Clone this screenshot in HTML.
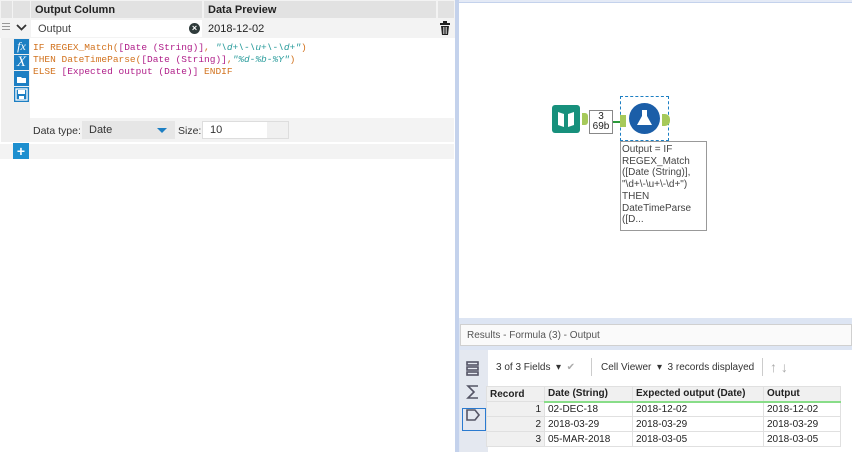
<!DOCTYPE html>
<html><head><style>
*{margin:0;padding:0;box-sizing:border-box}
body{width:852px;height:452px;overflow:hidden;background:#fff;font-family:"Liberation Sans",sans-serif;font-size:11px;color:#222;position:relative}
.a{position:absolute;white-space:nowrap}
.mono{font-family:"Liberation Mono",monospace;font-size:9.5px;line-height:12px;white-space:pre}
.o{color:#d2731f}.m{color:#b0208a}.t{color:#2a9c9c;font-style:italic}
.ib{position:absolute;left:14px;width:15px;height:15px;background:#1d7fc3;color:#fff;font-family:"Liberation Serif",serif;font-style:italic;font-size:12px;text-align:center;line-height:15px}
td{font-size:10px;height:15px;padding:0 3px;border:1px solid #e0e0e0;white-space:nowrap}
</style></head><body>
<div class="a" style="left:0;top:0;width:455px;height:19px;background:#f3f3f3"></div>
<div class="a" style="left:1px;top:1px;width:11px;height:17px;background:#e2e2e2"></div>
<div class="a" style="left:13px;top:1px;width:17px;height:17px;background:#e2e2e2"></div>
<div class="a" style="left:31px;top:1px;width:171px;height:17px;background:#e2e2e2;font-weight:bold;padding:3px 4px">Output Column</div>
<div class="a" style="left:204px;top:1px;width:232px;height:17px;background:#e2e2e2;font-weight:bold;padding:3px 4px">Data Preview</div>
<div class="a" style="left:438px;top:1px;width:16px;height:17px;background:#e2e2e2"></div>
<div class="a" style="left:0;top:19px;width:455px;height:19px;background:#f3f3f3"></div>
<div class="a" style="left:2px;top:23px;width:8px;height:1px;background:#999;box-shadow:0 3px 0 #999,0 6px 0 #999"></div>
<svg class="a" style="left:16px;top:24px" width="11" height="7"><path d="M1 1l4.5 4.5L10 1" fill="none" stroke="#333" stroke-width="1.8"/></svg>
<div class="a" style="left:31px;top:20px;width:171px;height:17px;background:#fff;padding:3px 7px;color:#444">Output</div>
<div class="a" style="left:189px;top:23px;width:11px;height:11px;border-radius:50%;background:#2f3b3b;color:#fff;font-size:9px;line-height:11px;text-align:center;font-weight:bold">×</div>
<div class="a" style="left:204px;top:20px;width:232px;height:17px;background:#f3f3f3;padding:3px 4px">2018-12-02</div>
<div class="a" style="left:440px;top:21px;width:10px;height:14px">
<svg width="10" height="14"><rect x="0" y="2" width="10" height="2" fill="#222"/><rect x="3" y="0" width="4" height="2" fill="#222"/><path d="M1 5h8l-1 9H2z" fill="#222"/><path d="M3.5 6v7M5 6v7M6.5 6v7" stroke="#fff" stroke-width=".6"/></svg></div>
<div class="a" style="left:1px;top:38px;width:29px;height:104px;background:#efefef"></div>
<div class="ib" style="top:39px">fx</div>
<div class="ib" style="top:55px;font-size:15px">X</div>
<div class="ib" style="top:71px"><svg width="15" height="15"><path d="M3 6h4l1 1h4v5H3z" fill="#fff"/></svg></div>
<div class="ib" style="top:87px"><svg width="15" height="15"><rect x="2" y="2" width="11" height="11" fill="none" stroke="#fff" stroke-width="1.3"/><rect x="4" y="3" width="7" height="4" fill="#fff"/><rect x="5" y="9" width="5" height="3" fill="#fff"/></svg></div>
<div class="a mono" style="left:33px;top:42px"><span class="o">IF REGEX_Match(</span><span class="m">[Date (String)]</span><span class="o">, </span><span class="t">"\d+\-\u+\-\d+"</span><span class="o">)</span>
<span class="o">THEN DateTimeParse(</span><span class="m">[Date (String)]</span><span class="o">,</span><span class="t">"%d-%b-%Y"</span><span class="o">)</span>
<span class="o">ELSE </span><span class="m">[Expected output (Date)]</span><span class="o"> ENDIF</span></div>
<div class="a" style="left:30px;top:118px;width:424px;height:24px;background:#f3f3f3"></div>
<div class="a" style="left:82px;top:121px;width:93px;height:18px;background:#e6e6e6;padding:3px 7px;color:#333">Date</div>
<div class="a" style="left:33px;top:125px;color:#333;font-size:10.5px;z-index:2">Data type:</div>
<div class="a" style="left:157px;top:128px;width:0;height:0;border-left:5px solid transparent;border-right:5px solid transparent;border-top:5px solid #1d7fc3"></div>
<div class="a" style="left:178px;top:125px;color:#333;font-size:10.5px">Size:</div>
<div class="a" style="left:202px;top:121px;width:87px;height:18px;background:#fff;border:1px solid #ddd;padding:2px 7px;color:#333">10</div>
<div class="a" style="left:267px;top:122px;width:21px;height:16px;background:#f0f0f0"></div>
<div class="a" style="left:0;top:144px;width:454px;height:15px;background:#f3f3f3"></div>
<div class="a" style="left:13px;top:143px;width:16px;height:16px;background:#1d8fcf;color:#fff;font-weight:bold;text-align:center;line-height:16px;font-size:14px">+</div>
<div class="a" style="left:455px;top:0;width:4px;height:452px;background:#c4d2ec"></div>
<div class="a" style="left:459px;top:0;width:393px;height:3px;background:#e4eaf6;border-bottom:1px solid #c4d2ec"></div>
<div class="a" style="left:552px;top:105px;width:28px;height:28px;background:#17907c;border-radius:3px"><svg width="28" height="28"><path d="M6 7l6 2v13l-6-2z" fill="#fff"/><path d="M22 7l-6 2v13l6-2z" fill="#fff"/></svg></div>
<div class="a" style="left:582px;top:113px;width:6px;height:12px;background:#a6c95a;border-radius:0 3px 3px 0"></div>
<div class="a" style="left:589px;top:110px;width:24px;height:24px;border:1px solid #888;background:#fff;font-size:10px;text-align:center;line-height:10px;padding-top:1px">3<br>69b</div>
<div class="a" style="left:613px;top:121px;width:8px;height:2px;background:#2a9a3a"></div>
<div class="a" style="left:620px;top:96px;width:49px;height:45px;border:1px dashed #1d7fc3"></div>
<div class="a" style="left:620px;top:115px;width:6px;height:12px;background:#a6c95a"></div>
<div class="a" style="left:629px;top:103px;width:31px;height:31px;border-radius:50%;background:#1b5ea8"><svg width="31" height="31"><path d="M13 7h5v6l5 9h-15l5-9z" fill="#fff"/></svg></div>
<div class="a" style="left:662px;top:114px;width:8px;height:12px;background:#a6c95a;border-radius:0 5px 5px 0"></div>
<div class="a" style="left:620px;top:141px;width:87px;height:90px;border:1px solid #999;background:#fff;font-size:10px;line-height:11.7px;color:#444;padding:2px 1px">Output = IF<br>REGEX_Match<br>([Date (String)],<br>"\d+\-\u+\-\d+")<br>THEN<br>DateTimeParse<br>([D...</div>
<div class="a" style="left:459px;top:318px;width:393px;height:134px;background:#dde5f3"></div>
<div class="a" style="left:460px;top:324px;width:392px;height:22px;background:#fafafa;border:1px solid #d0d0d0;padding:5px 6px;color:#555;font-size:10px">Results - Formula (3) - Output</div>
<div class="a" style="left:460px;top:350px;width:28px;height:102px;background:#e4e8f0"></div>
<div class="a" style="left:488px;top:350px;width:364px;height:102px;background:#fff"></div>
<svg class="a" style="left:465px;top:360px" width="16" height="80"><g fill="none" stroke="#556" stroke-width="1.6"><rect x="2" y="2" width="11" height="3"/><rect x="2" y="7" width="11" height="3"/><rect x="2" y="12" width="11" height="3"/><path d="M13 26H3l6 6-6 6h10"/><path d="M2 50h8l4 5-4 5H2z"/></g></svg>
<div class="a" style="left:462px;top:408px;width:24px;height:23px;border:1px solid #2a7ad0"></div>
<div class="a" style="left:496px;top:362px;font-size:10px;color:#333">3 of 3 Fields &nbsp;▾ &nbsp;<span style="color:#aaa">✔</span></div>
<div class="a" style="left:591px;top:358px;width:1px;height:18px;background:#ccc"></div>
<div class="a" style="left:601px;top:362px;font-size:10px;color:#333">Cell Viewer &nbsp;▾ &nbsp;3 records displayed</div>
<div class="a" style="left:762px;top:358px;width:1px;height:18px;background:#ccc"></div>
<div class="a" style="left:770px;top:359px;font-size:14px;color:#aaa">↑ ↓</div>
<table class="a" style="left:486px;top:386px;border-collapse:collapse;background:#fff">
<tr style="font-weight:bold;background:#f0f0f0"><td style="width:58px">Record</td><td style="width:88px;border-bottom:2px solid #8d8">Date (String)</td><td style="width:131px;border-bottom:2px solid #8d8">Expected output (Date)</td><td style="width:77px;border-bottom:2px solid #8d8">Output</td></tr>
<tr><td style="text-align:right;background:#f0f0f0">1</td><td>02-DEC-18</td><td>2018-12-02</td><td>2018-12-02</td></tr>
<tr><td style="text-align:right;background:#f0f0f0">2</td><td>2018-03-29</td><td>2018-03-29</td><td>2018-03-29</td></tr>
<tr><td style="text-align:right;background:#f0f0f0">3</td><td>05-MAR-2018</td><td>2018-03-05</td><td>2018-03-05</td></tr>
</table>
</body></html>
